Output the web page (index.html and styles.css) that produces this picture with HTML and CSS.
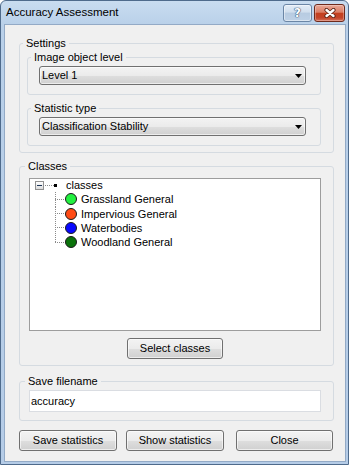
FILE: index.html
```html
<!DOCTYPE html>
<html>
<head>
<meta charset="utf-8">
<title>Accuracy Assessment</title>
<link rel="stylesheet" href="styles.css">
</head>
<body>
<div class="window">
  <div class="titlebar">
    <span class="title">Accuracy Assessment</span>
    <div class="caption">
      <div class="cap help"><span>?</span></div>
      <div class="cap close">
        <svg width="12" height="10" viewBox="0 0 12 10">
          <path d="M2.5 2L9.5 8M9.5 2L2.5 8" stroke="#5a2416" stroke-width="4.2" stroke-linecap="round" fill="none"/>
          <path d="M2.5 2L9.5 8M9.5 2L2.5 8" stroke="#ffffff" stroke-width="2.4" stroke-linecap="round" fill="none"/>
        </svg>
      </div>
    </div>
  </div>
  <div class="client">
    <fieldset class="group outer">
      <legend>Settings</legend>
      <fieldset class="group inner">
        <legend>Image object level</legend>
        <div class="combo"><span>Level 1</span><svg class="arrow" width="7" height="4" viewBox="0 0 7 4"><path d="M0 0h7L3.5 4z" fill="#000"/></svg></div>
      </fieldset>
      <fieldset class="group inner second">
        <legend>Statistic type</legend>
        <div class="combo"><span>Classification Stability</span><svg class="arrow" width="7" height="4" viewBox="0 0 7 4"><path d="M0 0h7L3.5 4z" fill="#000"/></svg></div>
      </fieldset>
    </fieldset>

    <fieldset class="group classes">
      <legend>Classes</legend>
      <div class="tree">
        <div class="tree-list">
          <div class="row root">
            <span class="expander"><span class="minus"></span></span>
            <span class="stub"></span>
            <span class="node"></span>
            <span class="label root-label">classes</span>
          </div>
          <div class="children">
            <div class="row"><span class="branch"></span><span class="dot grass"></span><span class="label">Grassland General</span></div>
            <div class="row"><span class="branch"></span><span class="dot imperv"></span><span class="label">Impervious General</span></div>
            <div class="row"><span class="branch"></span><span class="dot water"></span><span class="label">Waterbodies</span></div>
            <div class="row"><span class="branch last"></span><span class="dot wood"></span><span class="label">Woodland General</span></div>
          </div>
        </div>
      </div>
      <div class="btn-row"><button class="btn select">Select classes</button></div>
    </fieldset>

    <fieldset class="group save">
      <legend>Save filename</legend>
      <div class="textbox">accuracy</div>
    </fieldset>

    <div class="actions">
      <button class="btn act">Save statistics</button>
      <button class="btn act show">Show statistics</button>
      <button class="btn act close-btn">Close</button>
    </div>
  </div>
</div>
</body>
</html>
```

FILE: styles.css
```css
* { box-sizing: border-box; }
html, body { margin: 0; padding: 0; }
body {
  width: 349px;
  height: 465px;
  overflow: hidden;
  font-family: "Liberation Sans", Arial, sans-serif;
  font-size: 11px;
  color: #000;
  background: #fff;
}

.window {
  width: 349px;
  height: 465px;
  border: 1px solid #4f6b8c;
  border-radius: 6px 6px 0 0;
  background: linear-gradient(#c9dcf0 0px, #b9d0e9 24px, #b5cce7 100%);
  padding: 0 2px 2px 3px;
  display: flex;
  flex-direction: column;
}

.titlebar {
  height: 23px;
  flex: none;
  display: flex;
  justify-content: space-between;
  align-items: flex-start;
  padding: 0 1px 0 2px;
}
.title {
  font-size: 11.5px;
  line-height: 23px;
  color: #000;
}
.caption {
  display: flex;
  gap: 2px;
  margin-top: 3px;
}
.cap {
  height: 18px;
  display: flex;
  align-items: center;
  justify-content: center;
}
.help {
  width: 29px;
  border: 1px solid #6b86a6;
  border-radius: 3px;
  background: linear-gradient(#e4edf7 0%, #d0deed 45%, #b7cbe1 50%, #bed1e6 100%);
  box-shadow: inset 0 0 0 1px rgba(255,255,255,0.45);
}
.help span {
  font-family: "DejaVu Sans", sans-serif;
  font-weight: bold;
  font-size: 12px;
  line-height: 12px;
  color: #fff;
  text-shadow: 0 0 1px #2f4d73, 0 0 1px #2f4d73, 0 0 1px #2f4d73;
}
.close {
  width: 31px;
  border: 1px solid #6e2a1c;
  border-radius: 3px;
  background: linear-gradient(#e9a896 0%, #db7f67 45%, #c4401f 52%, #c3452a 80%, #d8725a 100%);
  box-shadow: inset 0 0 0 1px rgba(255,255,255,0.3);
}

.client {
  flex: 1;
  background: #f0f0f0;
  border: 1px solid #93aac6;
  padding: 11px 11px 10px 14px;
  display: flex;
  flex-direction: column;
}

.group {
  margin: 0;
  min-width: 0;
  border: 1px solid #d5dbe1;
  border-radius: 3px;
}
.group legend {
  padding: 0 3px;
  line-height: 14px;
  white-space: nowrap;
}

.outer { padding: 0 12px 6px 7px; }
.outer > legend { margin-left: -4px; }

.inner { padding: 2px 14px 9px 11px; }
.inner > legend { margin-left: -8px; }
.inner.second { margin-top: 6px; }

.classes { margin-top: 6px; padding: 5px 12px 6px 9px; }
.classes > legend { margin-left: -4px; }

.save { margin-top: 8px; padding: 2px 12px 8px 9px; }
.save > legend { margin-left: -4px; }

.combo {
  height: 19px;
  border: 1px solid #707070;
  border-radius: 3px;
  background: linear-gradient(#f3f3f3 0%, #ebebeb 50%, #dedede 52%, #d0d0d0 100%);
  box-shadow: inset 0 0 0 1px rgba(255,255,255,0.6);
  display: flex;
  align-items: center;
  justify-content: space-between;
  padding: 0 3px 0 2px;
  line-height: 17px;
}
.arrow { display: block; }

.tree {
  height: 153px;
  border: 1px solid #9d9d9d;
  background: #fff;
}
.tree-list { margin-top: -1px; }
.row {
  height: 14.25px;
  display: flex;
  align-items: center;
}
.label {
  white-space: nowrap;
  line-height: 14px;
}
.root { padding-left: 5px; }
.expander {
  width: 9px;
  height: 9px;
  border: 1px solid #919191;
  background: linear-gradient(#ffffff, #dcdcdc);
  display: flex;
  align-items: center;
  justify-content: center;
}
.minus {
  width: 5px;
  height: 1px;
  background: #1d3557;
}
.stub {
  width: 10px;
  height: 1px;
  background: repeating-linear-gradient(to right, transparent 0 1px, #8a8a8a 1px 2px);
}
.node {
  width: 3px;
  height: 3px;
  background: #000;
}
.root-label { margin-left: 9px; }

.children { margin-left: 25px; }
.branch {
  width: 10px;
  align-self: stretch;
  background:
    repeating-linear-gradient(to right, #8a8a8a 0 1px, transparent 1px 2px) 0 50% / 100% 1px no-repeat,
    repeating-linear-gradient(to bottom, #8a8a8a 0 1px, transparent 1px 2px) 0 0 / 1px 100% no-repeat;
}
.branch.last {
  background:
    repeating-linear-gradient(to right, #8a8a8a 0 1px, transparent 1px 2px) 0 50% / 100% 1px no-repeat,
    repeating-linear-gradient(to bottom, #8a8a8a 0 1px, transparent 1px 2px) 0 0 / 1px 50% no-repeat;
}
.dot {
  width: 12px;
  height: 12px;
  border-radius: 50%;
  border: 1px solid #1a1a1a;
  flex: none;
}
.dot + .label { margin-left: 4px; }
.grass { background: #22f040; }
.imperv { background: #ff4a14; }
.water { background: #0808ff; }
.wood { background: #0a720a; }

.btn {
  font: inherit;
  color: #000;
  height: 21px;
  padding: 0;
  border: 1px solid #707070;
  border-radius: 3px;
  background: linear-gradient(#f3f3f3 0%, #ebebeb 50%, #dedede 52%, #d0d0d0 100%);
  box-shadow: inset 0 0 0 1px rgba(255,255,255,0.6);
  line-height: 19px;
}
.btn-row {
  margin-top: 7px;
  display: flex;
  justify-content: center;
}
.select { width: 96px; }

.textbox {
  height: 22px;
  border: 1px solid #dadde2;
  background: #fff;
  padding-left: 1px;
  line-height: 20px;
}

.actions {
  margin-top: 9px;
  display: flex;
}
.act { width: 98px; }
.show { margin-left: 9px; }
.close-btn { margin-left: 12px; width: 97px; }
```
